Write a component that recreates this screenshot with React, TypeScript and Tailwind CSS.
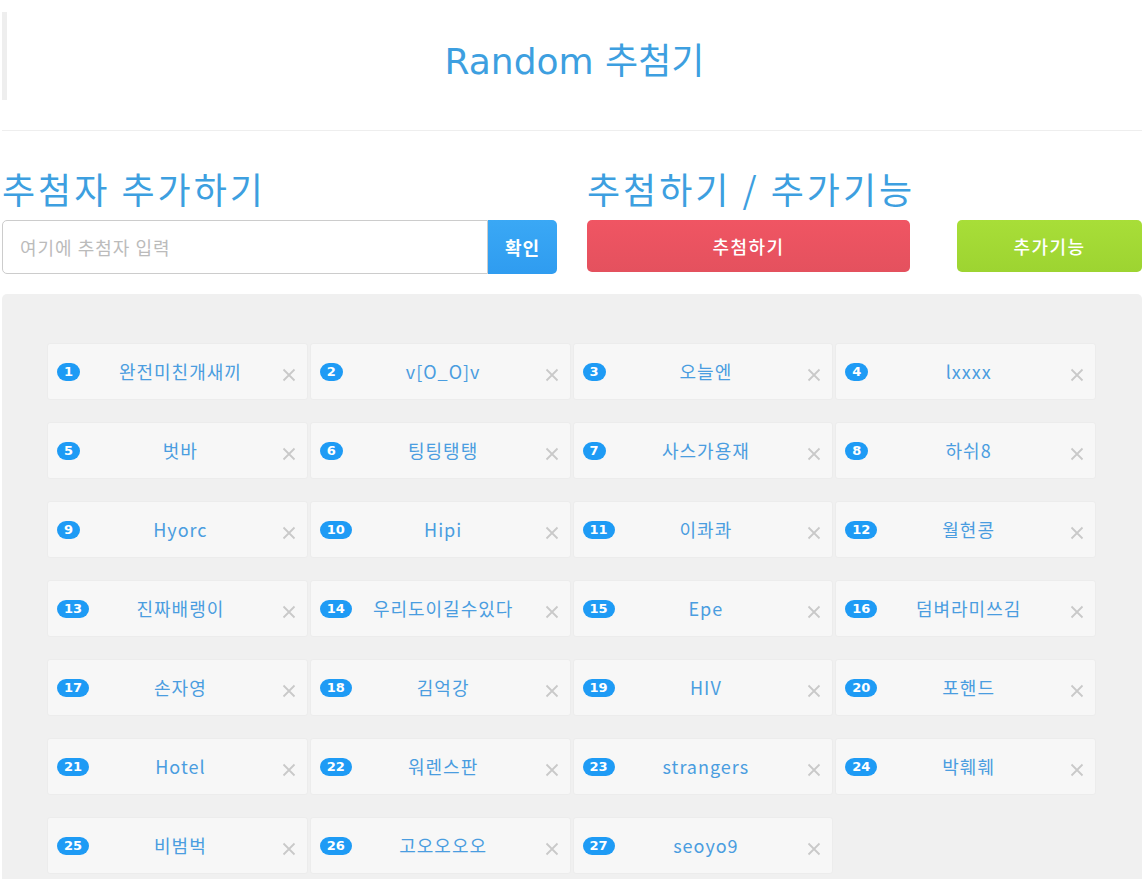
import { useState } from "react";

const names = [
  "완전미친개새끼", "v[O_O]v", "오늘엔", "lxxxx",
  "벗바", "팅팅탱탱", "사스가용재", "하쉬8",
  "Hyorc", "Hipi", "이콰콰", "월현콩",
  "진짜배랭이", "우리도이길수있다", "Epe", "덤벼라미쓰김",
  "손자영", "김억강", "HIV", "포핸드",
  "Hotel", "워렌스판", "strangers", "박훼훼",
  "비범벅", "고오오오오", "seoyo9",
];

const font = "font-['DejaVu_Sans','Noto_Sans_CJK_KR',sans-serif]";

function Card({ no, name }: { no: number; name: string }) {
  return (
    <div className="relative flex h-[57px] items-center justify-center rounded-[3px] border border-[#ececec] bg-[#f7f7f7] pl-[6px]">
      <span className="absolute left-[9px] top-[19px] rounded-full bg-[#1e9bf5] px-[7px] text-[13px] font-bold leading-[18px] text-white font-['DejaVu_Sans',sans-serif]">
        {no}
      </span>
      <span className="text-[18px] tracking-[1px] text-[#4a9de0] font-['Noto_Sans_CJK_KR',sans-serif]">{name}</span>
      <svg className="absolute right-[11px] top-[24px]" width="14" height="14" viewBox="0 0 14 14">
        <path d="M1.5 1.5l11 11M12.5 1.5l-11 11" stroke="#c9c9c9" strokeWidth="1.8" />
      </svg>
    </div>
  );
}

export default function App() {
  const [value, setValue] = useState("");
  return (
    <div className={`min-h-[879px] bg-white px-[2px] ${font}`}>
      <div className="mt-[12px] flex h-[88px] items-center justify-center border-l-[5px] border-[#eeeeee] pt-[12px]">
        <h1 className="text-[36px] leading-[40px] text-[#3d9fe0]">Random 추첨기</h1>
      </div>
      <hr className="mt-[30px] border-t border-[#eeeeee]" />

      <div className="mt-[37px] flex gap-[30px]">
        <div className="w-[555px]">
          <h2 className="mb-[12px] text-[36px] leading-[40px] tracking-[3px] text-[#3d9fe0] font-['Noto_Sans_CJK_KR',sans-serif]">추첨자 추가하기</h2>
          <div className="flex h-[54px]">
            <input
              value={value}
              onChange={(e) => setValue(e.target.value)}
              placeholder="여기에 추첨자 입력"
              className="w-[486px] rounded-l-[5px] border border-[#cccccc] px-[17px] text-[18px] tracking-[1px] text-[#555] outline-none placeholder:text-[#bbbbbb] font-['Noto_Sans_CJK_KR',sans-serif]"
            />
            <button className="w-[69px] rounded-r-[5px] bg-gradient-to-b from-[#3aa8f5] to-[#2f9cf0] text-[18px] font-bold tracking-[1px] text-white font-['Noto_Sans_CJK_KR',sans-serif]">
              확인
            </button>
          </div>
        </div>
        <div className="w-[555px]">
          <h2 className="mb-[12px] text-[36px] leading-[40px] tracking-[3px] text-[#3d9fe0] font-['Noto_Sans_CJK_KR',sans-serif]">추첨하기 / 추가기능</h2>
          <div className="flex h-[52px] justify-between">
            <button className="w-[323px] rounded-[5px] bg-gradient-to-b from-[#f05563] to-[#e4515e] text-[18px] font-medium tracking-[1.5px] text-white font-['Noto_Sans_CJK_KR',sans-serif]">
              추첨하기
            </button>
            <button className="w-[185px] rounded-[5px] bg-gradient-to-b from-[#a8de38] to-[#9dd431] text-[18px] font-medium tracking-[1.5px] text-white font-['Noto_Sans_CJK_KR',sans-serif]">
              추가기능
            </button>
          </div>
        </div>
      </div>

      <div className="mt-[20px] rounded-t-[5px] bg-[#f0f0f0] pl-[45px] pr-[46px] pt-[49px] pb-[40px]">
        <div className="grid grid-cols-4 gap-x-[2px] gap-y-[22px]">
          {names.map((n, i) => (
            <Card key={i} no={i + 1} name={n} />
          ))}
        </div>
      </div>
    </div>
  );
}
